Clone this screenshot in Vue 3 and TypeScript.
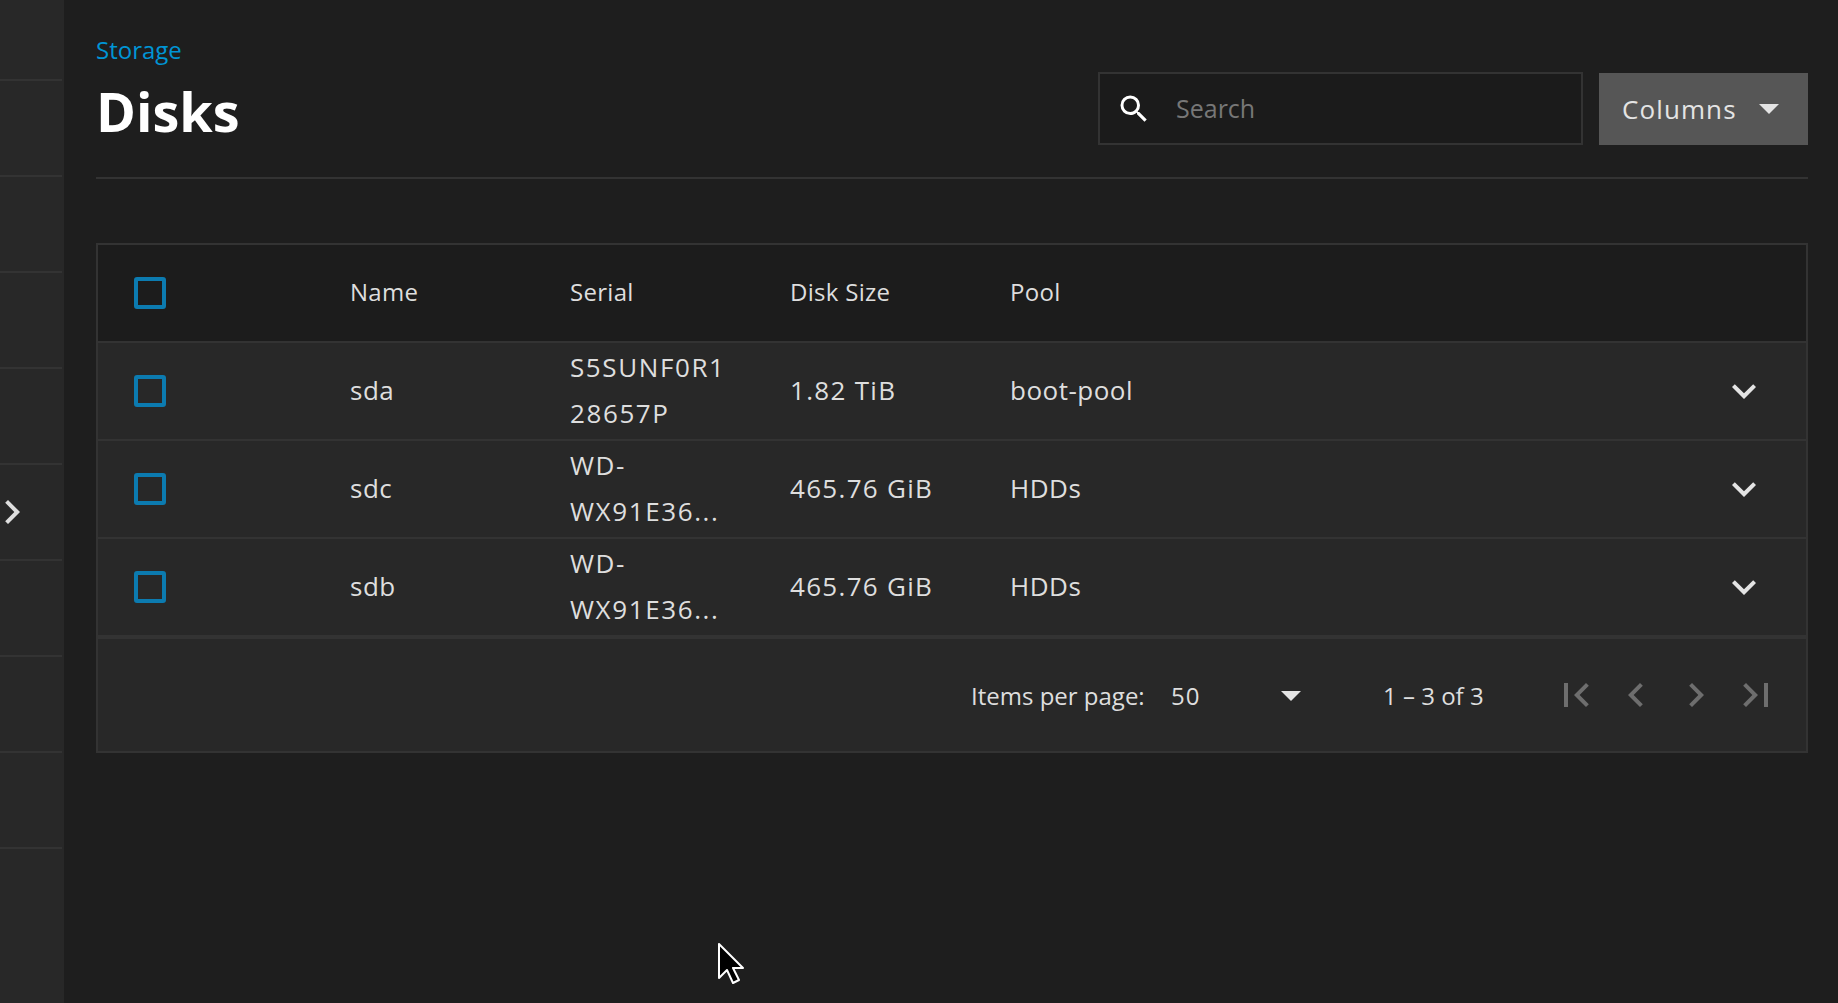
<script setup lang="ts">
interface Disk {
  name: string
  serial: string[]
  size: string
  pool: string
}

const disks: Disk[] = [
  { name: 'sda', serial: ['S5SUNF0R1', '28657P'], size: '1.82 TiB', pool: 'boot-pool' },
  { name: 'sdc', serial: ['WD-', 'WX91E36...'], size: '465.76 GiB', pool: 'HDDs' },
  { name: 'sdb', serial: ['WD-', 'WX91E36...'], size: '465.76 GiB', pool: 'HDDs' },
]

const navItems = Array.from({ length: 10 }, (_, i) => i)

const pagerIcons = [
  'M18.41 16.59L13.82 12l4.59-4.59L17 6l-6 6 6 6zM6 6h2v12H6z',
  'M15.41 7.41L14 6l-6 6 6 6 1.41-1.41L10.83 12z',
  'M10 6L8.59 7.41 13.17 12l-4.58 4.59L10 18l6-6z',
  'M5.59 7.41L10.18 12l-4.59 4.59L7 18l6-6-6-6zM16 6h2v12h-2z',
]
</script>

<template>
  <div class="shell">
    <aside class="rail">
      <div v-for="i in navItems" :key="i" class="rail-item">
        <svg v-if="i === 5" class="rail-toggle" viewBox="0 0 24 24">
          <path d="M10 6L8.59 7.41 13.17 12l-4.58 4.59L10 18l6-6z" />
        </svg>
      </div>
    </aside>

    <main class="content">
      <header class="page-head">
        <div class="titles">
          <div class="crumb">Storage</div>
          <h1 class="title">Disks</h1>
        </div>
        <div class="actions">
          <label class="search">
            <svg class="search-icon" viewBox="0 0 24 24">
              <path d="M15.5 14h-.79l-.28-.27A6.47 6.47 0 0 0 16 9.5 6.5 6.5 0 1 0 9.5 16c1.61 0 3.09-.59 4.23-1.57l.27.28v.79l5 4.99L20.49 19l-4.99-5zm-6 0C7.01 14 5 11.99 5 9.5S7.01 5 9.5 5 14 7.01 14 9.5 11.99 14 9.5 14z" />
            </svg>
            <span class="placeholder">Search</span>
          </label>
          <button class="columns-btn" type="button">
            <span>Columns</span>
            <i class="caret"></i>
          </button>
        </div>
      </header>

      <section class="table">
        <div class="row head-row">
          <div class="cell-check"><i class="checkbox"></i></div>
          <div class="cell">Name</div>
          <div class="cell">Serial</div>
          <div class="cell">Disk Size</div>
          <div class="cell">Pool</div>
        </div>

        <div v-for="disk in disks" :key="disk.name" class="row body-row">
          <div class="cell-check"><i class="checkbox"></i></div>
          <div class="cell">{{ disk.name }}</div>
          <div class="cell serial">
            <span v-for="line in disk.serial" :key="line">{{ line }}</span>
          </div>
          <div class="cell size">{{ disk.size }}</div>
          <div class="cell">{{ disk.pool }}</div>
          <svg class="expand" viewBox="0 0 24 24">
            <path d="M16.59 8.59L12 13.17 7.41 8.59 6 10l6 6 6-6z" />
          </svg>
        </div>

        <footer class="pager">
          <span class="per-page-label">Items per page:</span>
          <div class="per-page">
            <span>50</span>
            <i class="caret"></i>
          </div>
          <span class="range">1 – 3 of 3</span>
          <div class="pager-btns">
            <svg v-for="d in pagerIcons" :key="d" class="pager-icon" viewBox="0 0 24 24">
              <path :d="d" />
            </svg>
          </div>
        </footer>
      </section>
    </main>

    <svg class="cursor" viewBox="0 0 26 41">
      <path d="M1 1v34l8-8 6 13 6-3-6-12h10z" fill="#000" stroke="#fff" stroke-width="2" stroke-linejoin="round" />
    </svg>
  </div>
</template>

<style scoped>
.shell {
  position: relative;
  display: flex;
  width: 1838px;
  height: 1003px;
  overflow: hidden;
  background: #1e1e1e;
  color: #dedede;
  font-family: "Open Sans", "Noto Sans", sans-serif;
  font-size: 26px;
}

.rail {
  flex: 0 0 64px;
  box-sizing: border-box;
  margin-top: -15px;
  padding-right: 2px;
  background: #282828;
}

.rail-item {
  height: 96px;
  box-sizing: border-box;
  border-bottom: 2px solid #333;
  display: flex;
  align-items: center;
}

.rail-item:last-child {
  border-bottom: 0;
}

.rail-toggle {
  width: 48px;
  height: 48px;
  margin-left: -12px;
  flex: none;
  fill: #dedede;
}

.content {
  flex: 1;
  min-width: 0;
  padding: 0 30px 0 32px;
}

.page-head {
  display: flex;
  justify-content: space-between;
  height: 179px;
  box-sizing: border-box;
  border-bottom: 2px solid #333;
}

.crumb {
  margin-top: 34px;
  font-size: 24px;
  line-height: 32px;
  color: #0095d5;
}

.title {
  margin: 13px 0 0;
  font-size: 54px;
  line-height: 64px;
  font-weight: 700;
  color: #fff;
}

.actions {
  display: flex;
  gap: 16px;
  margin-top: 72px;
  height: 73px;
}

.search {
  width: 485px;
  box-sizing: border-box;
  display: flex;
  align-items: center;
  background: #1b1b1b;
  border: 2px solid #333;
  font-size: 25px;
}

.search-icon {
  width: 36px;
  height: 36px;
  margin-left: 16px;
  fill: #fff;
}

.placeholder {
  margin-left: 24px;
  padding-bottom: 2px;
  color: #777;
}

.columns-btn {
  width: 209px;
  display: flex;
  align-items: center;
  gap: 22px;
  padding: 0 0 0 23px;
  margin-top: 1px;
  border: 0;
  background: #565656;
  color: #e4e4e4;
  font: inherit;
  letter-spacing: 1.1px;
}

.caret {
  width: 0;
  height: 0;
  border-left: 10px solid transparent;
  border-right: 10px solid transparent;
  border-top: 10px solid #e4e4e4;
}

.table {
  margin-top: 64px;
  border: 2px solid #333;
}

.row {
  display: grid;
  grid-template-columns: 252px 220px 220px 220px 1fr 48px;
  align-items: center;
  height: 98px;
  box-sizing: border-box;
}

.cell {
  padding-bottom: 3px;
}

.head-row {
  background: #1c1c1c;
  border-bottom: 2px solid #333;
  font-size: 24px;
  font-weight: 500;
  letter-spacing: 0.3px;
}

.body-row {
  background: #282828;
  border-bottom: 2px solid #333;
  letter-spacing: 0.5px;
}

.body-row:nth-last-child(2) {
  height: 100px;
  border-bottom-width: 4px;
}

.cell-check {
  padding-left: 36px;
  display: flex;
}

.checkbox {
  display: block;
  width: 32px;
  height: 32px;
  box-sizing: border-box;
  border: 4px solid #0c7bb0;
  border-radius: 3px;
}

.serial {
  display: flex;
  flex-direction: column;
  line-height: 46px;
  letter-spacing: 1.6px;
}

.size {
  letter-spacing: 1.3px;
}

.expand {
  grid-column: 6;
  width: 48px;
  height: 48px;
  margin-left: -38px;
  fill: #e4e4e4;
}

.pager {
  display: flex;
  align-items: center;
  height: 112px;
  padding-left: 873px;
  background: #282828;
  font-size: 24px;
}

.per-page-label {
  width: 200px;
}

.per-page {
  width: 130px;
  display: flex;
  align-items: center;
  justify-content: space-between;
  letter-spacing: 1px;
}

.per-page .caret {
  margin-top: 2px;
}

.range {
  margin-left: 82px;
  width: 169px;
}

.pager-btns {
  display: flex;
  gap: 12px;
}

.pager-icon {
  width: 48px;
  height: 48px;
  fill: #6e6e6e;
}

.cursor {
  position: absolute;
  left: 718px;
  top: 943px;
  width: 26px;
  height: 41px;
}
</style>
